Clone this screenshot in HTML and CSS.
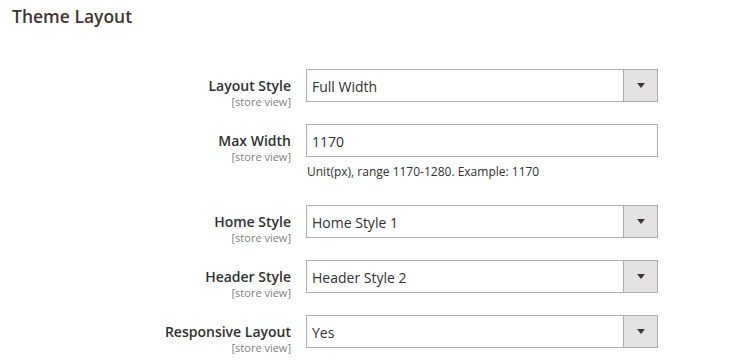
FILE: index.html
```html
<!DOCTYPE html>
<html>
<head>
<meta charset="utf-8">
<link rel="stylesheet" href="styles.css">
</head>
<body>
<div class="page">
  <h2 class="title">Theme Layout</h2>
  <div class="fields">
    <div class="row">
      <div class="label"><span class="name">Layout Style</span><span class="scope">[store view]</span></div>
      <div class="control">
        <div class="select"><span class="value">Full Width</span><span class="arrow"><span class="tri"></span></span></div>
      </div>
    </div>
    <div class="row">
      <div class="label"><span class="name">Max Width</span><span class="scope">[store view]</span></div>
      <div class="control">
        <div class="input">1170</div>
        <p class="note">Unit(px), range 1170-1280. Example: 1170</p>
      </div>
    </div>
    <div class="row">
      <div class="label"><span class="name">Home Style</span><span class="scope">[store view]</span></div>
      <div class="control">
        <div class="select"><span class="value">Home Style 1</span><span class="arrow"><span class="tri"></span></span></div>
      </div>
    </div>
    <div class="row">
      <div class="label"><span class="name">Header Style</span><span class="scope">[store view]</span></div>
      <div class="control">
        <div class="select"><span class="value">Header Style 2</span><span class="arrow"><span class="tri"></span></span></div>
      </div>
    </div>
    <div class="row">
      <div class="label"><span class="name">Responsive Layout</span><span class="scope">[store view]</span></div>
      <div class="control">
        <div class="select"><span class="value">Yes</span><span class="arrow"><span class="tri"></span></span></div>
      </div>
    </div>
  </div>
</div>
</body>
</html>
```
FILE: styles.css
```css
* { box-sizing: border-box; }
html, body { margin: 0; padding: 0; background: #fff; }
body { font-family: "Open Sans", "Liberation Sans", sans-serif; color: #303030; }
.page { padding: 5px 0 0 12px; }
.title {
  margin: 0;
  font-size: 17.5px;
  line-height: 23px;
  font-weight: 600;
  color: #41362f;
}
.fields { margin-top: 41px; }
.row {
  display: grid;
  grid-template-columns: 279px 352px;
  column-gap: 15px;
  margin-bottom: 16px;
}
.label {
  display: flex;
  flex-direction: column;
  align-items: flex-end;
  text-align: right;
  padding-top: 7px;
}
.name {
  font-size: 14px;
  line-height: 19px;
  font-weight: 600;
  color: #303030;
}
.scope {
  font-size: 11px;
  line-height: 13px;
  color: #808080;
}
.select, .input {
  height: 33px;
  border: 1px solid #adadad;
  background: #fff;
  font-size: 14px;
  line-height: 19px;
  color: #303030;
  display: flex;
}
.input { padding: 7px 5px 0; }
.value { flex: 1; padding: 7px 5px 0; }
.arrow {
  width: 34px;
  background: #e3e3e3;
  border-left: 1px solid #adadad;
  display: flex;
  align-items: center;
  justify-content: center;
}
.tri {
  width: 0;
  height: 0;
  border-left: 4px solid transparent;
  border-right: 4px solid transparent;
  border-top: 5px solid #41362f;
}
.note {
  margin: 7px 0 9px 1px;
  font-size: 12px;
  line-height: 16px;
  color: #303030;
}
```
